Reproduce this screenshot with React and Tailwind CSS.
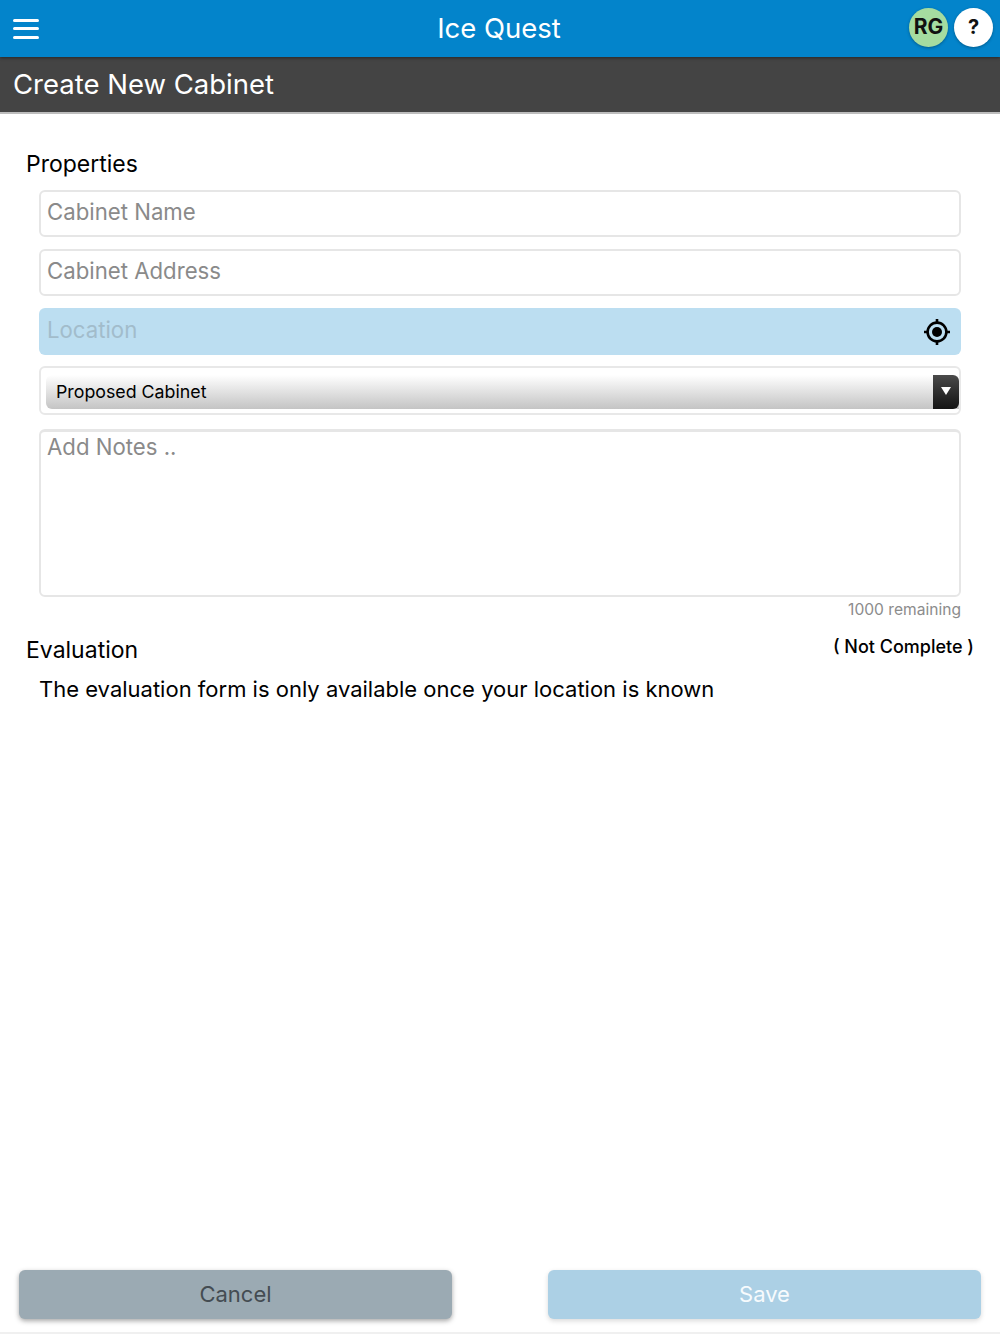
import React from "react";

const LocateIcon = () => (
  <svg width="28" height="28" viewBox="0 0 28 28" fill="none" stroke="#000" strokeWidth="2.6">
    <circle cx="14" cy="14" r="9.4" />
    <circle cx="14" cy="14" r="5" fill="#000" stroke="none" />
    <path d="M14 1V5M14 23v4M1 14H5M23 14h4" />
  </svg>
);

const fieldClass =
  "block w-full h-[47px] rounded-md border-2 border-[#e6e6e6] bg-white px-[6px] pb-[4px] text-[22.2px] text-black placeholder-[#8a8a8a] outline-none";

export default function App() {
  return (
    <div className="flex h-[1334px] w-[1000px] flex-col overflow-hidden bg-white font-['Inter',sans-serif] text-black">
      <header className="relative z-10 flex h-[57px] shrink-0 items-center justify-between bg-[#0384cb] pl-[13px] pr-[7px] shadow-[0_1px_3px_rgba(0,0,0,0.45)]">
        <div className="flex w-[26px] flex-col gap-[5.5px]">
          <span className="h-[3px] rounded-sm bg-white" />
          <span className="h-[3px] rounded-sm bg-white" />
          <span className="h-[3px] rounded-sm bg-white" />
        </div>
        <h1 className="absolute left-0 right-0 pr-[2px] text-center text-[27.5px] font-normal leading-none text-white">Ice Quest</h1>
        <div className="relative flex items-center gap-[6px] pb-[3px]">
          <div className="flex h-[39px] w-[39px] items-center justify-center rounded-full bg-[#a5dca0] text-[21px] font-bold text-[#111] shadow-[0_1px_3px_rgba(0,0,0,0.3)]">RG</div>
          <div className="flex h-[39px] w-[39px] items-center justify-center rounded-full bg-white text-[20px] font-bold text-[#111] shadow-[0_1px_3px_rgba(0,0,0,0.3)]">?</div>
        </div>
      </header>

      <div className="flex h-[57px] shrink-0 items-center border-b-2 border-[#bdbdbd] bg-[#444444] pl-[13px]">
        <h2 className="text-[27.5px] font-normal leading-none text-white">Create New Cabinet</h2>
      </div>

      <main className="flex flex-1 flex-col">
        <div className="pl-[26px] pt-[36px] text-[23px] leading-[28px]">Properties</div>

        <div className="mx-[39px] mt-[12px] flex flex-col">
          <input className={fieldClass} placeholder="Cabinet Name" />
          <input className={`${fieldClass} mt-[12px]`} placeholder="Cabinet Address" />
          <div className="relative mt-[12px]">
            <input className="block h-[47px] w-full rounded-md bg-[#bcdef1] px-[8px] pb-[5px] text-[22.2px] placeholder-[#a2bccb] outline-none" placeholder="Location" />
            <span className="absolute right-[10px] top-[10px]"><LocateIcon /></span>
          </div>

          <div className="mt-[11px] flex h-[49px] items-center rounded-md border-2 border-[#e8e8e8] pl-[5px] pt-[3px]">
            <div className="flex h-[34px] flex-1 items-center overflow-hidden rounded-l-md bg-gradient-to-b from-white to-[#c4c4c4]">
              <span className="flex-1 pl-[10px] text-[17.8px]">Proposed Cabinet</span>
              <span className="flex h-full w-[26px] items-center justify-center rounded-r-md bg-gradient-to-b from-[#4b4b4b] to-[#141414]">
                <span className="mb-[3px] h-0 w-0 border-x-[5px] border-t-[8px] border-x-transparent border-t-white" />
              </span>
            </div>
          </div>

          <textarea
            className="mt-[14px] block h-[168px] w-full resize-none rounded-md border-2 border-t-[3px] border-[#e6e6e6] px-[6px] text-[22.2px] leading-[30px] placeholder-[#8a8a8a] outline-none"
            placeholder="Add Notes .."
          />
          <div className="mt-[3px] text-right text-[15.6px] leading-[20px] text-[#8c8c8c]">1000 remaining</div>
        </div>

        <div className="mt-[9px] flex items-start justify-between pl-[26px] pr-[26px]">
          <div className="pt-[7px] text-[23px] leading-[28px]">Evaluation</div>
          <div className="pt-[6px] text-[18px] font-medium leading-[24px]">( Not Complete )</div>
        </div>
        <p className="ml-[39px] mt-[10px] text-[22px] leading-[30px]">The evaluation form is only available once your location is known</p>

        <div className="mt-auto flex justify-between border-b-2 border-[#f0f0f0] px-[19px] pb-[13px]">
          <button className="h-[49px] w-[433px] rounded-md bg-[#9baab3] text-[22px] text-[#444c52] shadow-[0_2px_5px_rgba(0,0,0,0.35)]">Cancel</button>
          <button className="h-[49px] w-[433px] rounded-md bg-[#acd0e5] text-[22px] text-[#f7fbfd] shadow-[0_2px_5px_rgba(0,0,0,0.15)]">Save</button>
        </div>
      </main>
    </div>
  );
}
